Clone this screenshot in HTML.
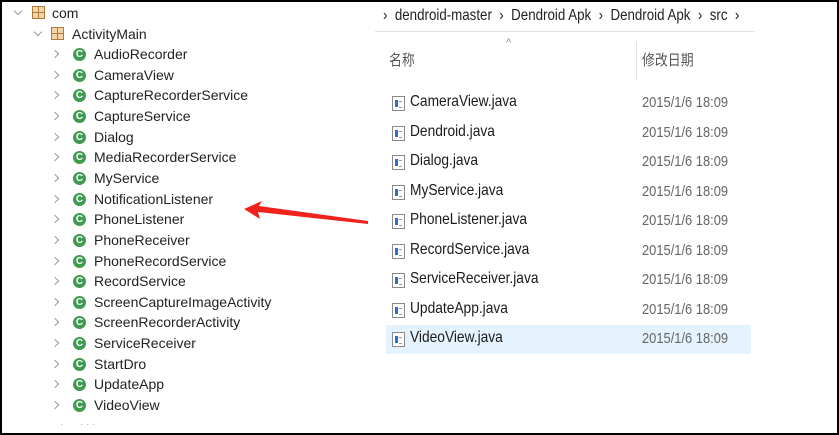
<!DOCTYPE html>
<html><head><meta charset="utf-8"><style>
body{margin:0;width:839px;height:435px;overflow:hidden;background:#fff;position:relative;font-family:"Liberation Sans","Noto Sans CJK SC",sans-serif;}
.frame{position:absolute;left:0;top:0;width:835px;height:431px;border:2px solid #000;}
.t{position:absolute;font-size:14px;color:#222;white-space:nowrap;line-height:16px;}
.chev{position:absolute;width:5px;height:5px;border-right:1.3px solid #999;border-bottom:1.3px solid #999;}
.c{position:absolute;width:13px;height:13px;border-radius:50%;background:#3f9a52;color:#fff;font-size:10px;font-weight:bold;line-height:13px;text-align:center;}
.pk{position:absolute;width:11px;height:11px;border:1px solid #b27a3c;background:
linear-gradient(#b27a3c,#b27a3c) 50% 0/1px 100% no-repeat,linear-gradient(#b27a3c,#b27a3c) 0 50%/100% 1px no-repeat,#f3d3a8;}
.f{position:absolute;font-size:16px;color:#1a1a1a;white-space:nowrap;transform:scaleX(.86);transform-origin:0 0;line-height:18px;}
.d{position:absolute;font-size:15px;color:#666;white-space:nowrap;transform:scaleX(.86);transform-origin:0 0;line-height:18px;}
.fi{position:absolute;width:11px;height:13px;border:1px solid #8a8a8a;background:#fff;}
.fi:before{content:"";position:absolute;left:2px;top:3px;width:3px;height:7px;background:#2a6fcf;}
.fi:after{content:"";position:absolute;left:6px;top:4px;width:3px;height:5px;border-top:1px solid #999;border-bottom:1px solid #999;}
</style></head><body>
<div class="frame"></div>
<div class="chev" style="left:15px;top:8px;transform:rotate(45deg)"></div>
<div class="pk" style="left:32px;top:6px"></div>
<div class="t" style="left:52px;top:5px">com</div>
<div class="chev" style="left:35px;top:29px;transform:rotate(45deg)"></div>
<div class="pk" style="left:51px;top:27px"></div>
<div class="t" style="left:72px;top:26px">ActivityMain</div>
<div id="tree"></div>
<div class="f" style="left:383px;top:7px;color:#222;font-size:15.5px">›&nbsp; dendroid-master &nbsp;›&nbsp; Dendroid Apk &nbsp;›&nbsp; Dendroid Apk &nbsp;›&nbsp; src &nbsp;›</div>
<div style="position:absolute;left:375px;top:31px;width:380px;height:1px;background:#e3e3e3"></div>
<div style="position:absolute;left:506px;top:37px;font-size:11px;color:#888">^</div>
<div class="d" style="left:389px;top:52px;color:#555">名称</div>
<div style="position:absolute;left:636px;top:42px;width:1px;height:38px;background:#e3e3e3"></div>
<div class="d" style="left:642px;top:52px;color:#555">修改日期</div>
<div style="position:absolute;left:386px;top:325px;width:365px;height:29px;background:#e5f3ff"></div>
<div id="files"></div>
<svg style="position:absolute;left:0;top:0" width="839" height="435"><polygon points="244,209 262,201 259,206 368,221 368,224 258,212 260,219" fill="#f0231c"/></svg>
<script>
var n=["AudioRecorder","CameraView","CaptureRecorderService","CaptureService","Dialog","MediaRecorderService","MyService","NotificationListener","PhoneListener","PhoneReceiver","PhoneRecordService","RecordService","ScreenCaptureImageActivity","ScreenRecorderActivity","ServiceReceiver","StartDro","UpdateApp","VideoView"],h="";
n.forEach(function(s,i){var y=54+i*20.65;h+='<div class="chev" style="left:52px;top:'+(y-3)+'px;transform:rotate(-45deg)"></div><div class="c" style="left:73px;top:'+(y-6)+'px">C</div><div class="t" style="left:94px;top:'+(y-8)+'px">'+s+'</div>';});
h+='<div class="t" style="left:60px;top:417px;color:#aaa;font-size:10px">·&nbsp;&nbsp;&nbsp;&nbsp;&nbsp; ·&nbsp;·&nbsp;·</div>';
document.getElementById("tree").innerHTML=h;
var f=["CameraView.java","Dendroid.java","Dialog.java","MyService.java","PhoneListener.java","RecordService.java","ServiceReceiver.java","UpdateApp.java","VideoView.java"],g="";
f.forEach(function(s,i){var y=103+i*29.5;g+='<div class="fi" style="left:392px;top:'+(y-7)+'px"></div><div class="f" style="left:410px;top:'+(y-10)+'px">'+s+'</div><div class="d" style="left:642px;top:'+(y-9)+'px">2015/1/6 18:09</div>';});
document.getElementById("files").innerHTML=g;
</script>
</body></html>
